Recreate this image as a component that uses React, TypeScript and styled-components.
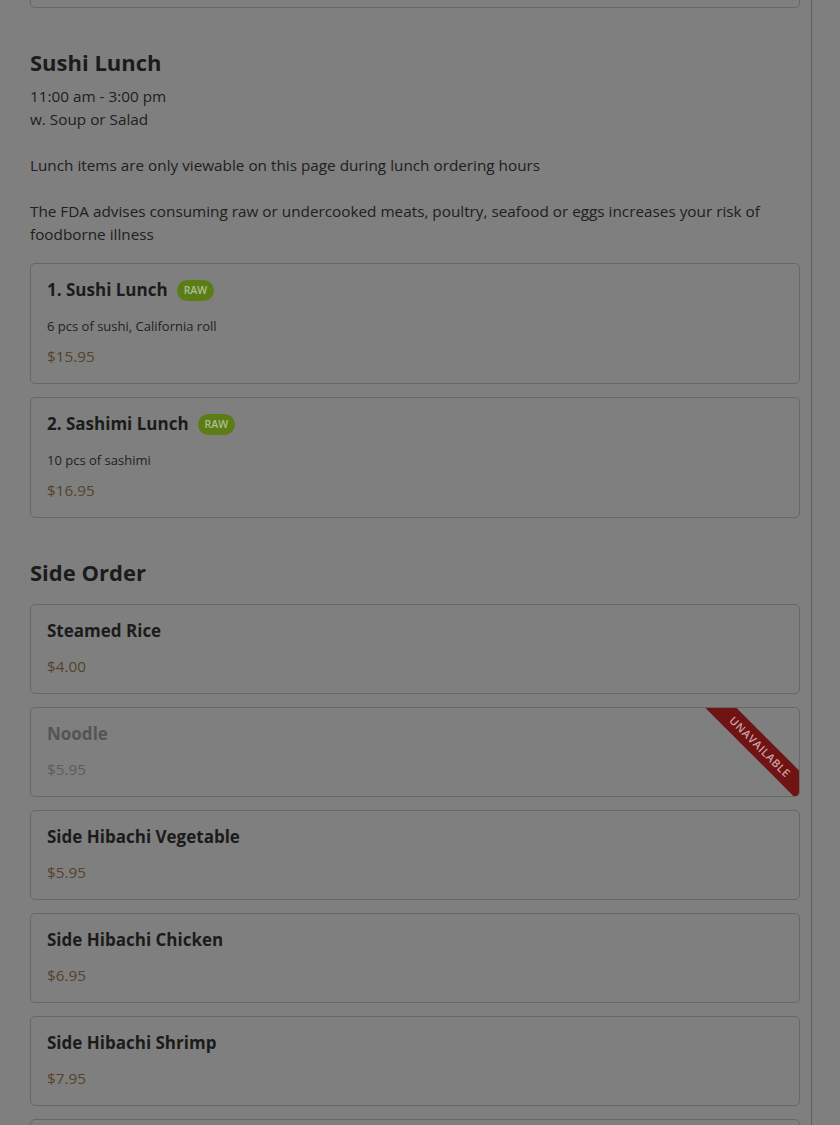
import React from "react";
import styled, { createGlobalStyle } from "styled-components";

const GlobalStyle = createGlobalStyle`
  html, body {
    margin: 0;
    padding: 0;
    background: #7f7f7f;
  }
  body {
    font-family: "Open Sans", "Lato", sans-serif;
    color: #1f1f1f;
  }
  * {
    box-sizing: border-box;
  }
`;

const Page = styled.div`
  width: 812px;
  height: 1125px;
  padding: 0 11px 0 30px;
  border-right: 1px solid #5e5e5e;
  overflow: hidden;
`;

const TailCard = styled.div`
  height: 8px;
  border: 1px solid #676767;
  border-top: none;
  border-radius: 0 0 5px 5px;
`;

const Section = styled.section`
  display: flex;
  flex-direction: column;
  margin-top: 39px;
`;

const SectionTitle = styled.h2`
  margin: 0;
  font-size: 22px;
  line-height: 30px;
  font-weight: 700;
  color: #1b1b1b;
`;

const Info = styled.div`
  display: flex;
  flex-direction: column;
  gap: 23px;
  margin-top: 8px;
  font-size: 15.3px;
  line-height: 23px;
  color: #202020;

  p {
    margin: 0;
  }
`;

const CardList = styled.div`
  display: flex;
  flex-direction: column;
  gap: 13px;
  margin-top: 17px;
`;

const Card = styled.div<{ $unavailable?: boolean }>`
  position: relative;
  display: flex;
  flex-direction: column;
  overflow: hidden;
  padding: 14px 16px 16px;
  border: 1px solid #676767;
  border-radius: 5px;
  color: ${(p) => (p.$unavailable ? "#545454" : "#1b1b1b")};
`;

const TitleRow = styled.div`
  display: flex;
  align-items: center;
  gap: 9px;
  height: 24px;
  margin-bottom: 12px;
`;

const ItemName = styled.h3`
  margin: 0;
  font-size: 17px;
  line-height: 24px;
  font-weight: 700;
`;

const Badge = styled.span`
  display: inline-flex;
  align-items: center;
  justify-content: center;
  height: 21px;
  padding: 0 7px;
  border-radius: 11px;
  background: #5a7e15;
  color: #aebd96;
  font-size: 10.5px;
  font-weight: 600;
`;

const Description = styled.p`
  margin: 3px 0 10px;
  font-size: 13px;
  line-height: 18px;
  color: #222;
`;

const Price = styled.div<{ $unavailable?: boolean }>`
  font-size: 15.3px;
  line-height: 22px;
  color: ${(p) => (p.$unavailable ? "#5c5c5c" : "#55432a")};
`;

const Ribbon = styled.div`
  position: absolute;
  top: 28px;
  right: -36px;
  width: 150px;
  height: 22px;
  transform: rotate(45deg);
  background: #701313;
  color: #c9a3a3;
  font-size: 11px;
  font-weight: 600;
  line-height: 22px;
  letter-spacing: 0.6px;
  text-align: center;
  text-transform: uppercase;
`;

type Item = {
  name: string;
  price: string;
  desc?: string;
  raw?: boolean;
  unavailable?: boolean;
};

const lunch: Item[] = [
  { name: "1. Sushi Lunch", desc: "6 pcs of sushi, California roll", price: "$15.95", raw: true },
  { name: "2. Sashimi Lunch", desc: "10 pcs of sashimi", price: "$16.95", raw: true },
];

const sides: Item[] = [
  { name: "Steamed Rice", price: "$4.00" },
  { name: "Noodle", price: "$5.95", unavailable: true },
  { name: "Side Hibachi Vegetable", price: "$5.95" },
  { name: "Side Hibachi Chicken", price: "$6.95" },
  { name: "Side Hibachi Shrimp", price: "$7.95" },
  { name: "Side Hibachi Steak", price: "$8.95" },
];

const MenuCard = ({ item }: { item: Item }) => (
  <Card $unavailable={item.unavailable}>
    <TitleRow>
      <ItemName>{item.name}</ItemName>
      {item.raw && <Badge>RAW</Badge>}
    </TitleRow>
    {item.desc && <Description>{item.desc}</Description>}
    <Price $unavailable={item.unavailable}>{item.price}</Price>
    {item.unavailable && <Ribbon>Unavailable</Ribbon>}
  </Card>
);

export default function App() {
  return (
    <>
      <GlobalStyle />
      <Page>
        <TailCard />

        <Section>
          <SectionTitle>Sushi Lunch</SectionTitle>
          <Info>
            <p>
              11:00 am - 3:00 pm
              <br />
              w. Soup or Salad
            </p>
            <p>Lunch items are only viewable on this page during lunch ordering hours</p>
            <p>
              The FDA advises consuming raw or undercooked meats, poultry, seafood or eggs
              increases your risk of foodborne illness
            </p>
          </Info>
          <CardList>
            {lunch.map((item) => (
              <MenuCard key={item.name} item={item} />
            ))}
          </CardList>
        </Section>

        <Section>
          <SectionTitle>Side Order</SectionTitle>
          <CardList>
            {sides.map((item) => (
              <MenuCard key={item.name} item={item} />
            ))}
          </CardList>
        </Section>
      </Page>
    </>
  );
}
